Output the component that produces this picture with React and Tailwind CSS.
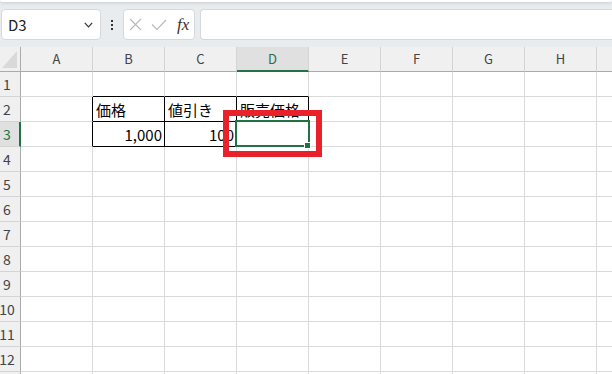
const cols = ['A', 'B', 'C', 'D', 'E', 'F', 'G', 'H', 'I'];
const rows = [1, 2, 3, 4, 5, 6, 7, 8, 9, 10, 11, 12, 13];

const data = {
  2: { B: { v: '価格' }, C: { v: '値引き' }, D: { v: '販売価格' } },
  3: { B: { v: '1,000', right: true }, C: { v: '100', right: true } },
};

const Cell = ({ r, ci }) => {
  const c = cols[ci];
  const blackRight = (r === 2 || r === 3) && ci <= 3;
  const blackBottom = r >= 1 && r <= 3 && ci >= 1 && ci <= 3;
  const cell = data[r] && data[r][c];
  return (
    <div
      className={`w-[72px] shrink-0 h-full border-r border-b flex items-center ${
        blackRight ? 'border-r-black' : 'border-r-[#dadada]'
      } ${blackBottom ? 'border-b-black' : 'border-b-[#dadada]'} ${
        cell && cell.right ? 'justify-end pr-[2px]' : 'justify-start pl-[3px]'
      }`}
    >
      {cell && (
        <span className="text-[15px] leading-none text-black whitespace-nowrap">
          {cell.v}
        </span>
      )}
    </div>
  );
};

const App = () => {
  return (
    <div className="w-[612px] h-[374px] overflow-hidden bg-white font-['Noto_Sans_CJK_JP',sans-serif]">
      {/* formula bar area */}
      <div className="h-[47px] bg-[#e9ecef] relative">
        <div className="h-[3px] bg-white border-b border-[#d3d7db] rounded-b-[3px] shadow-[0_1px_3px_rgba(0,0,0,0.08)]" />
        <div className="flex items-stretch h-[31px] mt-[6px]">
          <div className="ml-[1px] w-[100px] bg-white border border-[#d6d9dc] rounded-[4px] flex items-center justify-between pl-[6px] pr-[7px]">
            <span className="text-[15px] leading-none text-[#222]">D3</span>
            <svg width="9" height="6" viewBox="0 0 9 6" fill="none">
              <path d="M0.8 0.8 L4.5 4.8 L8.2 0.8" stroke="#333" strokeWidth="1.2" />
            </svg>
          </div>
          <div className="w-[22px] flex flex-col items-center justify-center gap-[2px]">
            <div className="w-[2px] h-[2px] bg-[#333]" />
            <div className="w-[2px] h-[2px] bg-[#333]" />
            <div className="w-[2px] h-[2px] bg-[#333]" />
          </div>
          <div className="w-[72px] bg-white border border-[#d6d9dc] rounded-[4px] flex items-center pl-[5px] gap-[9px]">
            <svg width="13" height="13" viewBox="0 0 13 13" fill="none">
              <path d="M1 1 L12 12 M12 1 L1 12" stroke="#b9b9b9" strokeWidth="1.1" />
            </svg>
            <svg width="16" height="12" viewBox="0 0 16 12" fill="none">
              <path d="M1 5.5 L6 10.5 L15 1" stroke="#b9b9b9" strokeWidth="1.1" />
            </svg>
            <span className="font-['Liberation_Serif',serif] italic text-[17px] leading-none text-[#333] ml-[1px]">
              fx
            </span>
          </div>
          <div className="ml-[5px] flex-1 bg-white border border-r-0 border-[#d6d9dc] rounded-l-[4px]" />
        </div>
      </div>

      {/* grid */}
      <div className="relative">
        {/* column header */}
        <div className="flex h-[25px]">
          <div className="w-[21px] shrink-0 h-full bg-[#f0f0f0] border-r border-b border-r-[#ababab] border-b-[#ababab] relative">
            <svg className="absolute right-[3px] bottom-[3px]" width="15" height="17" viewBox="0 0 15 17">
              <polygon points="15,0 15,17 0,17" fill="#d9d9d9" />
            </svg>
          </div>
          {cols.map((c) =>
            c === 'D' ? (
              <div
                key={c}
                className="w-[72px] shrink-0 h-full bg-[#e0e0e0] border-r border-r-[#d4d4d4] border-b-2 border-b-[#217346] flex items-center justify-center text-[13px] text-[#217346]"
              >
                {c}
              </div>
            ) : (
              <div
                key={c}
                className="w-[72px] shrink-0 h-full bg-[#f0f0f0] border-r border-r-[#d4d4d4] border-b border-b-[#ababab] flex items-center justify-center text-[13px] text-[#444]"
              >
                {c}
              </div>
            )
          )}
        </div>

        {rows.map((r) => (
          <div key={r} className="flex h-[25px]">
            {r === 3 ? (
              <div className="w-[21px] shrink-0 h-full bg-[#e0e0e0] border-r-2 border-r-[#217346] border-b border-b-[#d4d4d4] flex items-center">
                <span className="w-[14px] text-center text-[14px] leading-none text-[#217346]">{r}</span>
              </div>
            ) : (
              <div className="w-[21px] shrink-0 h-full bg-[#f0f0f0] border-r border-r-[#ababab] border-b border-b-[#d4d4d4] flex items-center">
                <span className="w-[14px] text-center text-[14px] leading-none text-[#444] whitespace-nowrap flex justify-center">{r}</span>
              </div>
            )}
            {cols.map((c, ci) => (
              <Cell key={c} r={r} ci={ci} />
            ))}
          </div>
        ))}

        {/* active cell D3 */}
        <div className="absolute left-[235px] top-[73px] w-[75px] h-[27px] border-2 border-[#217346]" />
        <div className="absolute left-[304px] top-[95px] w-[7px] h-[7px] bg-[#217346] border border-white" />

        {/* red highlight */}
        <div className="absolute left-[223px] top-[63px] w-[99px] h-[47px] border-[6px] border-[#e8212a]" />
      </div>
    </div>
  );
};

export default App;
